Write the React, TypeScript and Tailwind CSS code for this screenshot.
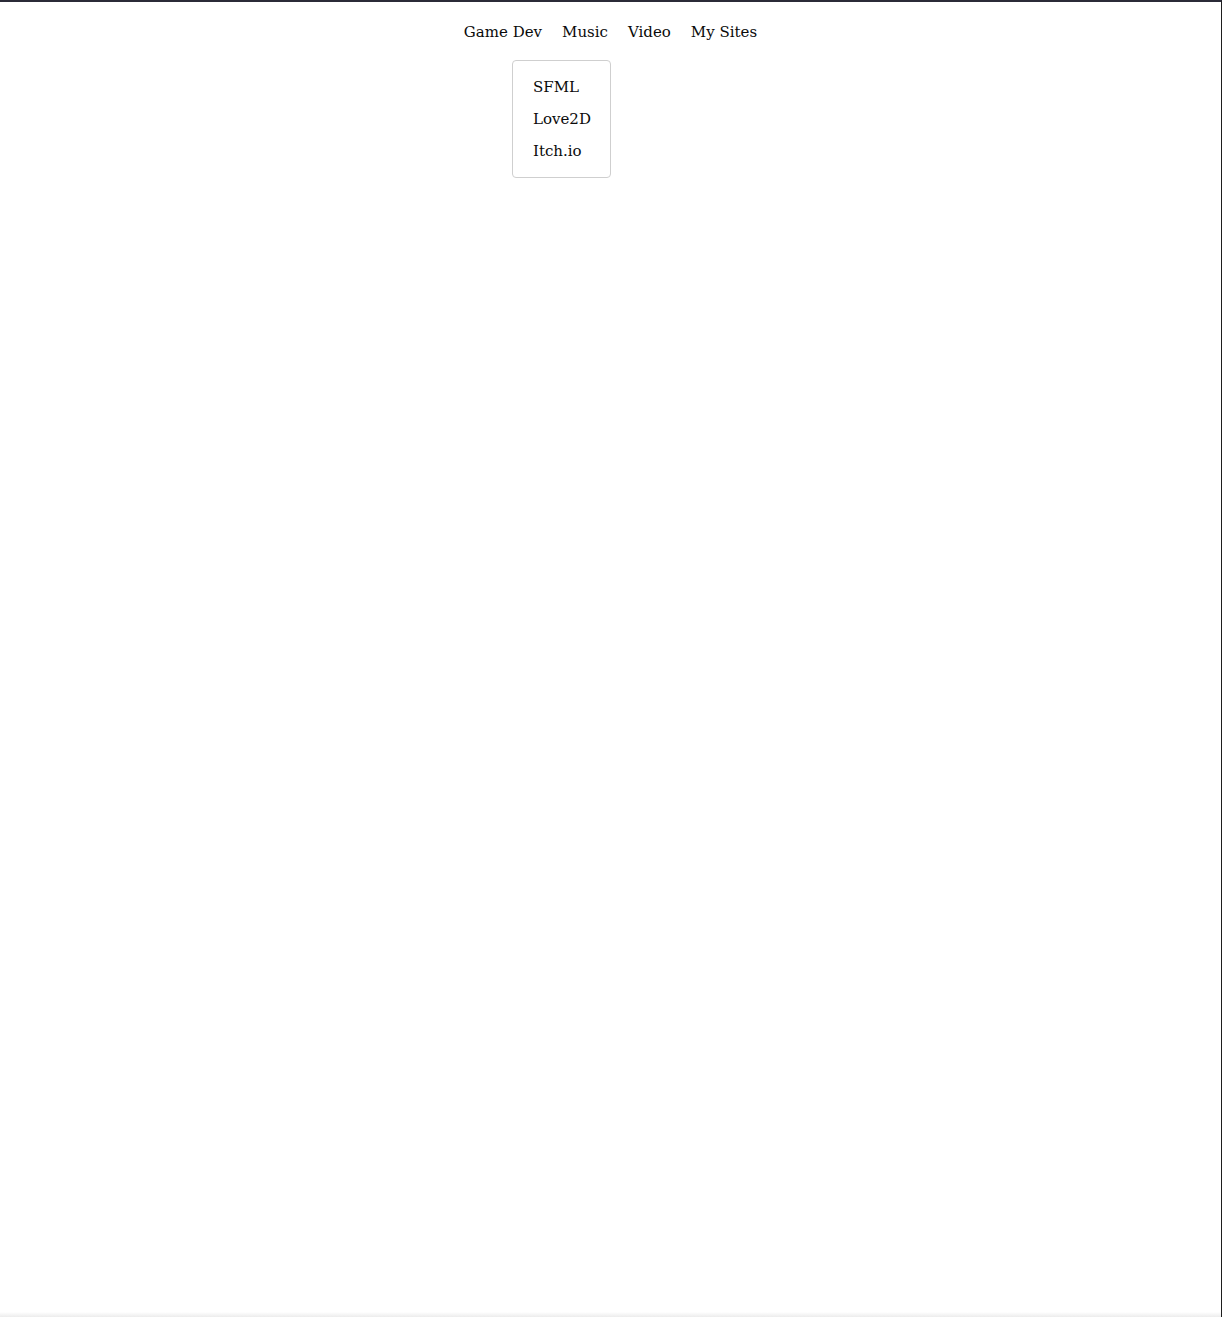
const navItems = ["Game Dev", "Music", "Video", "My Sites"];
const gameDevLinks = ["SFML", "Love2D", "Itch.io"];

export default function App() {
  return (
    <div className="relative min-h-[1317px] w-full overflow-hidden border-t-2 border-r border-t-[#2b2b38] border-r-[#1e1e1e] bg-white font-['DejaVu_Serif',serif] text-[15px] text-[#0a0a0a]">
      {/* top nav */}
      <nav className="flex justify-center pt-[20px]">
        <ul className="flex gap-5">
          {navItems.map((item) => (
            <li key={item} className="relative leading-5">
              <a href="#" className="whitespace-nowrap">
                {item}
              </a>
            </li>
          ))}
        </ul>
      </nav>

      {/* open dropdown */}
      <div className="absolute left-[512px] top-[58px] w-[99px] rounded-[4px] border border-[#cfcfcf] bg-white px-5 pt-[10px] pb-[10px]">
        <ul className="flex flex-col">
          {gameDevLinks.map((link) => (
            <li key={link} className="leading-8">
              <a href="#">{link}</a>
            </li>
          ))}
        </ul>
      </div>

      {/* bottom fade */}
      <div className="absolute inset-x-0 bottom-0 h-[5px] bg-gradient-to-b from-white to-[#ececec]" />
    </div>
  );
}
